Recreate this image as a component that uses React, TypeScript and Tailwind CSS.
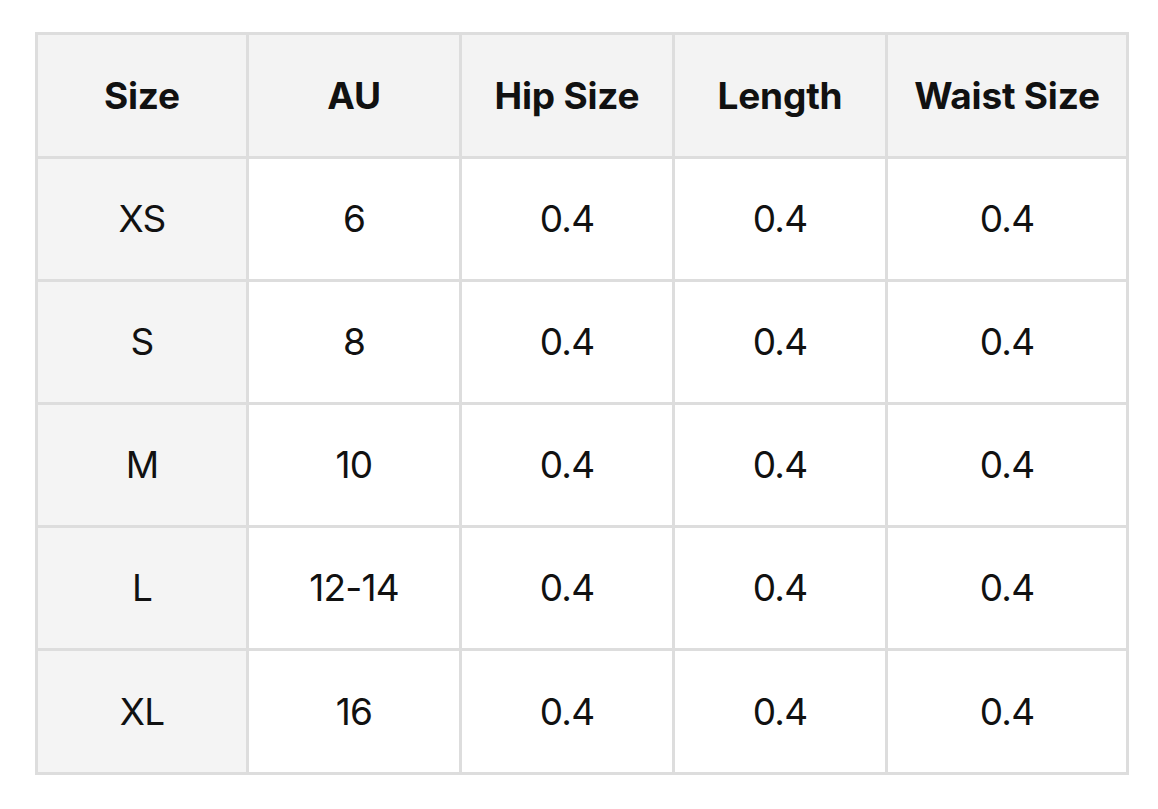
const headers = ['Size', 'AU', 'Hip Size', 'Length', 'Waist Size'];

const rows = [
  ['XS', '6', '0.4', '0.4', '0.4'],
  ['S', '8', '0.4', '0.4', '0.4'],
  ['M', '10', '0.4', '0.4', '0.4'],
  ['L', '12-14', '0.4', '0.4', '0.4'],
  ['XL', '16', '0.4', '0.4', '0.4'],
];

export default function App() {
  return (
    <div className="min-h-screen bg-white pl-[35px] pt-[32px] font-['Inter','Liberation_Sans',sans-serif] text-[#111]">
      {/* Size chart grid, gap shows as cell borders */}
      <div className="grid w-[1094px] grid-cols-[208px_210px_210px_210px_238px] grid-rows-[121px_120px_120px_120px_120px_121px] gap-[3px] border-[3px] border-[#dddddd] bg-[#dddddd]">
        {headers.map((h) => (
          <div
            key={h}
            className="flex items-center justify-center bg-[#f3f3f3] text-[37px] font-bold tracking-[-0.2px]"
          >
            {h}
          </div>
        ))}
        {rows.map((row) =>
          row.map((cell, i) => (
            <div
              key={row[0] + i}
              className={`flex items-center justify-center text-[37px] font-normal tracking-[-0.8px] ${
                i === 0 ? 'bg-[#f4f4f4]' : 'bg-white'
              }`}
            >
              {cell}
            </div>
          ))
        )}
      </div>
    </div>
  );
}
